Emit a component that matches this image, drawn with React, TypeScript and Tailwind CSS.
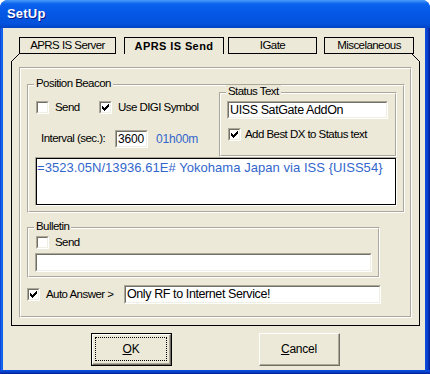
import React from 'react'

const FACE = 'bg-[#ECE9D8]'

function Check({ checked }: { checked?: boolean }) {
  return (
    <div className="h-[13px] w-[13px] shrink-0 border border-t-[#ACA899] border-l-[#ACA899] border-b-white border-r-white">
      <div className="flex h-full w-full items-center justify-center border border-t-[#716F64] border-l-[#716F64] border-b-[#F1EFE2] border-r-[#F1EFE2] bg-white">
        {checked && (
          <svg width="7" height="7" viewBox="0 0 7 7" shapeRendering="crispEdges">
            <path
              fill="#000"
              d="M6 0h1v1h-1z M5 1h2v1h-2z M0 2h1v1h-1z M4 2h3v1h-3z M0 3h2v1h-2z M3 3h3v1h-3z M0 4h5v1h-5z M1 5h3v1h-3z M2 6h1v1h-1z"
            />
          </svg>
        )}
      </div>
    </div>
  )
}

function Field({ className, children }: { className: string; children?: React.ReactNode }) {
  return (
    <div className={`shrink-0 border border-t-[#ACA899] border-l-[#ACA899] border-b-white border-r-white ${className}`}>
      <div className="flex h-full w-full items-center overflow-hidden border border-t-[#716F64] border-l-[#716F64] border-b-[#F1EFE2] border-r-[#F1EFE2] bg-white pl-[1px] text-black">
        {children}
      </div>
    </div>
  )
}

function Group({
  label,
  className,
  children,
}: {
  label: string
  className: string
  children?: React.ReactNode
}) {
  return (
    <div className={`relative shrink-0 border border-t-[#ACA899] border-l-[#ACA899] border-b-white border-r-white ${className}`}>
      <div className="h-full w-full border border-t-white border-l-white border-b-[#ACA899] border-r-[#ACA899]">
        {children}
      </div>
      <span className={`absolute left-[6px] top-[-8px] px-[2px] leading-[13px] ${FACE}`}>{label}</span>
    </div>
  )
}

function Tab({ label, w, active }: { label: string; w: string; active?: boolean }) {
  return (
    <div
      className={`flex h-[17px] items-center justify-center border-x border-t border-black ${w} ${
        active ? 'text-[11px] font-bold tracking-[0.4px]' : 'border-b'
      }`}
    >
      {label}
    </div>
  )
}

function Button({ children, primary, w }: { children: React.ReactNode; primary?: boolean; w: string }) {
  return (
    <div className={`h-[33px] ${w} ${primary ? 'border border-black' : ''}`}>
      <div className="h-full w-full border border-t-white border-l-white border-b-[#716F64] border-r-[#716F64]">
        <div className="relative flex h-full w-full items-center justify-center border-b border-r border-b-[#ACA899] border-r-[#ACA899]">
          {children}
          {primary && (
            <div className="absolute inset-x-[2px] inset-y-[2px] border border-dotted border-black" />
          )}
        </div>
      </div>
    </div>
  )
}

export default function App() {
  return (
    <div className="bg-white">
      <div className="flex h-[374px] w-[430px] flex-col overflow-hidden rounded-t-[8px] bg-[#0A5AE6] font-['Liberation_Sans',Arial,sans-serif] text-[11.5px] tracking-[-0.55px] text-black">
        {/* title bar */}
        <div className="flex h-[28px] items-center bg-[linear-gradient(180deg,#4A9CFA_0%,#0A63EE_14%,#0558E6_45%,#0452DC_85%,#0343C4_100%)] pl-[7px]">
          <span className="pb-[1px] text-[13px] font-bold tracking-[0.2px] text-white [text-shadow:1px_1px_#0A1A8A]">
            SetUp
          </span>
        </div>

        <div className="flex h-[342px]">
          <div className="w-[3px] bg-[linear-gradient(90deg,#0839C8,#1668F0,#0A5AE6)]" />

          <div className={`flex w-[422px] flex-col ${FACE}`}>
            {/* tabs */}
            <div className="mt-[9px] flex pl-[16px]">
              <Tab label="APRS IS Server" w="w-[97px]" />
              <div className="ml-[8px]">
                <Tab label="APRS IS Send" w="w-[100px]" active />
              </div>
              <div className="ml-[4px]">
                <Tab label="IGate" w="w-[89px]" />
              </div>
              <div className="ml-[7px]">
                <Tab label="Miscelaneous" w="w-[90px]" />
              </div>
            </div>

            {/* tab frame */}
            <div className="relative ml-[8px] h-[272px] w-[409px] border-x border-b border-black">
              <svg className="absolute left-[-1px] top-0" width="8" height="8" viewBox="0 0 8 8" shapeRendering="crispEdges">
                <path fill="#ECE9D8" d="M0 0h7v1h-7z M0 1h6v1h-6z M0 2h5v1h-5z M0 3h4v1h-4z M0 4h3v1h-3z M0 5h2v1h-2z M0 6h1v1h-1z" />
                <path fill="#000" d="M7 0h1v1h-1z M6 1h1v1h-1z M5 2h1v1h-1z M4 3h1v1h-1z M3 4h1v1h-1z M2 5h1v1h-1z M1 6h1v1h-1z M0 7h1v1h-1z" />
              </svg>
              <svg className="absolute right-[-1px] top-0" width="8" height="8" viewBox="0 0 8 8" shapeRendering="crispEdges">
                <path fill="#ECE9D8" d="M1 0h7v1h-7z M2 1h6v1h-6z M3 2h5v1h-5z M4 3h4v1h-4z M5 4h3v1h-3z M6 5h2v1h-2z M7 6h1v1h-1z" />
                <path fill="#000" d="M0 0h1v1h-1z M1 1h1v1h-1z M2 2h1v1h-1z M3 3h1v1h-1z M4 4h1v1h-1z M5 5h1v1h-1z M6 6h1v1h-1z M7 7h1v1h-1z" />
              </svg>

              {/* inner etched panel */}
              <div className="ml-[7px] mt-[13px] h-[251px] w-[393px] border border-t-[#ACA899] border-l-[#ACA899] border-b-white border-r-white">
                <div className="flex h-full w-full flex-col border border-t-white border-l-white border-b-[#ACA899] border-r-[#ACA899] pl-[6px]">
                  {/* Position Beacon */}
                  <Group label="Position Beacon" className="mt-[15px] h-[129px] w-[378px]">
                    <div className="flex h-[71px]">
                      <div className="flex w-[190px] flex-col">
                        <div className="mt-[15px] flex h-[13px] items-center pl-[7px]">
                          <Check />
                          <span className="ml-[6px] w-[44px]">Send</span>
                          <Check checked />
                          <span className="ml-[6px]">Use DIGI Symbol</span>
                        </div>
                        <div className="mt-[16px] flex h-[18px] items-center pl-[12px]">
                          <span className="w-[74px]">Interval (sec.):</span>
                          <Field className="h-[18px] w-[33px]">
                            <span className="text-[12px] tracking-[-0.2px]">3600</span>
                          </Field>
                          <span className="ml-[8px] text-[12px] tracking-[-0.2px] text-[#3366CC]">01h00m</span>
                        </div>
                      </div>
                      <Group label="Status Text" className="mt-[6px] h-[65px] w-[178px]">
                        <div className="flex flex-col pl-[6px]">
                          <Field className="mt-[7px] h-[18px] w-[161px]">
                            <span className="text-[12.5px] tracking-[-0.4px]">UISS SatGate AddOn</span>
                          </Field>
                          <div className="mt-[9px] flex h-[13px] items-center pl-[1px]">
                            <Check checked />
                            <span className="ml-[4px]">Add Best DX to Status text</span>
                          </div>
                        </div>
                      </Group>
                    </div>
                    <div className="ml-[6px] h-[49px] w-[362px] border border-t-[#ACA899] border-l-[#ACA899] border-b-white border-r-white">
                      <div className="h-full w-full border border-black bg-white pt-[1px] text-[13px] leading-[16px] tracking-[0.05px] text-[#3366CC]">
                        =3523.05N/13936.61E# Yokohama Japan via ISS {'{UISS54}'}
                      </div>
                    </div>
                  </Group>

                  {/* Bulletin */}
                  <Group label="Bulletin" className="mt-[14px] h-[51px] w-[353px]">
                    <div className="flex flex-col">
                      <div className="ml-[7px] mt-[7px] flex h-[13px] items-center">
                        <Check />
                        <span className="ml-[6px]">Send</span>
                      </div>
                      <Field className="ml-[6px] mt-[4px] h-[19px] w-[337px]" />
                    </div>
                  </Group>

                  {/* Auto answer */}
                  <div className="mt-[7px] flex h-[19px] items-center">
                    <Check checked />
                    <span className="ml-[6px] w-[78px]">Auto Answer &gt;</span>
                    <Field className="h-[19px] w-[257px]">
                      <span className="text-[12.5px] tracking-[-0.4px]">Only RF to Internet Service!</span>
                    </Field>
                  </div>
                </div>
              </div>
            </div>

            {/* buttons */}
            <div className="mt-[7px] flex pl-[88px]">
              <Button primary w="w-[81px]">
                <span className="text-[12px] tracking-[-0.2px]">
                  <span className="underline underline-offset-1">O</span>K
                </span>
              </Button>
              <div className="ml-[87px]">
                <Button w="w-[81px]">
                  <span className="text-[12px] tracking-[-0.2px]">
                    <span className="underline underline-offset-1">C</span>ancel
                  </span>
                </Button>
              </div>
            </div>
          </div>

          <div className="w-[5px] bg-[linear-gradient(90deg,#0A50E0,#0840C8,#001C9A)]" />
        </div>

        <div className="h-[4px] bg-[linear-gradient(180deg,#0A50E0,#0840C8,#001C9A)]" />
      </div>
    </div>
  )
}
